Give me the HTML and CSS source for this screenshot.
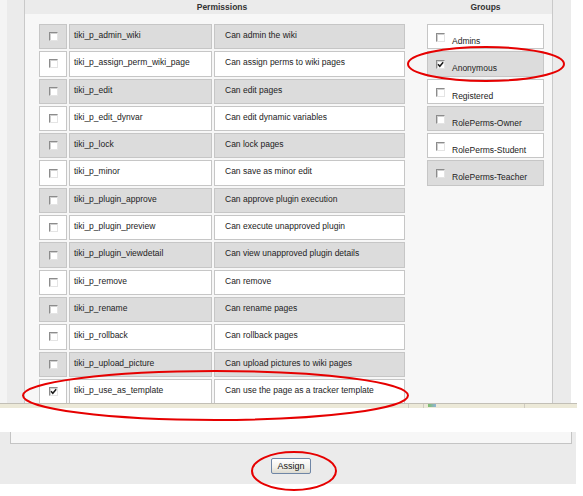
FILE: index.html
```html
<!DOCTYPE html>
<html lang="en">
<head>
<meta charset="utf-8">
<title>Assign permissions</title>
<link rel="stylesheet" href="styles.css">
</head>
<body>
<div class="top">
  <div class="panel">
    <div class="panel-head">
      <div class="head-cell">Permissions</div>
      <div class="head-cell">Groups</div>
    </div>
    <div class="panel-body">
      <div class="perms">
        <div class="cell chk odd"><span class="cb"></span></div><div class="cell name odd">tiki_p_admin_wiki</div><div class="cell desc odd">Can admin the wiki</div>
        <div class="cell chk"><span class="cb"></span></div><div class="cell name">tiki_p_assign_perm_wiki_page</div><div class="cell desc">Can assign perms to wiki pages</div>
        <div class="cell chk odd"><span class="cb"></span></div><div class="cell name odd">tiki_p_edit</div><div class="cell desc odd">Can edit pages</div>
        <div class="cell chk"><span class="cb"></span></div><div class="cell name">tiki_p_edit_dynvar</div><div class="cell desc">Can edit dynamic variables</div>
        <div class="cell chk odd"><span class="cb"></span></div><div class="cell name odd">tiki_p_lock</div><div class="cell desc odd">Can lock pages</div>
        <div class="cell chk"><span class="cb"></span></div><div class="cell name">tiki_p_minor</div><div class="cell desc">Can save as minor edit</div>
        <div class="cell chk odd"><span class="cb"></span></div><div class="cell name odd">tiki_p_plugin_approve</div><div class="cell desc odd">Can approve plugin execution</div>
        <div class="cell chk"><span class="cb"></span></div><div class="cell name">tiki_p_plugin_preview</div><div class="cell desc">Can execute unapproved plugin</div>
        <div class="cell chk odd"><span class="cb"></span></div><div class="cell name odd">tiki_p_plugin_viewdetail</div><div class="cell desc odd">Can view unapproved plugin details</div>
        <div class="cell chk"><span class="cb"></span></div><div class="cell name">tiki_p_remove</div><div class="cell desc">Can remove</div>
        <div class="cell chk odd"><span class="cb"></span></div><div class="cell name odd">tiki_p_rename</div><div class="cell desc odd">Can rename pages</div>
        <div class="cell chk"><span class="cb"></span></div><div class="cell name">tiki_p_rollback</div><div class="cell desc">Can rollback pages</div>
        <div class="cell chk odd"><span class="cb"></span></div><div class="cell name odd">tiki_p_upload_picture</div><div class="cell desc odd">Can upload pictures to wiki pages</div>
        <div class="cell chk"><span class="cb on"><svg viewBox="0 0 7 7" width="7" height="7"><path d="M1 3.2 L2.8 5.3 L6.2 1.2" fill="none" stroke="#1a1a1a" stroke-width="1.5"/></svg></span></div><div class="cell name">tiki_p_use_as_template</div><div class="cell desc">Can use the page as a tracker template</div>
      </div>
      <div class="groups">
        <div class="cell grp"><span class="cb"></span><span class="glabel">Admins</span></div>
        <div class="cell grp odd"><span class="cb on"><svg viewBox="0 0 7 7" width="7" height="7"><path d="M1 3.2 L2.8 5.3 L6.2 1.2" fill="none" stroke="#1a1a1a" stroke-width="1.5"/></svg></span><span class="glabel">Anonymous</span></div>
        <div class="cell grp"><span class="cb"></span><span class="glabel">Registered</span></div>
        <div class="cell grp odd"><span class="cb"></span><span class="glabel">RolePerms-Owner</span></div>
        <div class="cell grp"><span class="cb"></span><span class="glabel">RolePerms-Student</span></div>
        <div class="cell grp odd"><span class="cb"></span><span class="glabel">RolePerms-Teacher</span></div>
      </div>
    </div>
  </div>
</div>
<div class="statusbar">
  <span class="sb-part w1"></span><span class="sb-part w2"></span><span class="sb-part w3"><i class="sb-icon"></i></span><span class="sb-part w4"></span>
</div>
<div class="gap"></div>
<div class="bottom">
  <div class="panel-foot"></div>
  <div class="actions"><button class="btn" type="button">Assign</button></div>
</div>
<svg class="marks" width="583" height="496" viewBox="0 0 583 496">
  <ellipse cx="486" cy="64" rx="78" ry="17" fill="none" stroke="#e60000" stroke-width="2"/>
  <ellipse cx="215.5" cy="395.5" rx="192.5" ry="24.5" fill="none" stroke="#e60000" stroke-width="2"/>
  <ellipse cx="294" cy="471" rx="42" ry="19" fill="none" stroke="#e60000" stroke-width="2"/>
</svg>
</body>
</html>
```
FILE: styles.css
```css
html, body {
  margin: 0;
  padding: 0;
  background: #ffffff;
}
body {
  position: relative;
  width: 583px;
  height: 496px;
  overflow: hidden;
  font-family: "Liberation Sans", Arial, sans-serif;
  font-size: 8.5px;
  color: #222;
}

/* upper area: grey page with the permissions panel */
.top {
  box-sizing: border-box;
  width: 571px;
  height: 403px;
  overflow: hidden;
  background: #ebebeb;
  border-left: 7px solid #f4f4f4;
  padding: 0 18px 0 17px;
}
.panel {
  height: 100%;
  border-left: 1px solid #c9c9c9;
  border-right: 1px solid #c9c9c9;
  background: #f7f7f7;
}
.panel-head {
  display: grid;
  grid-template-columns: 366px 117px;
  column-gap: 22px;
  padding: 0 8px 0 14px;
  height: 14px;
  background: #ebebeb;
}
.head-cell {
  text-align: center;
  font-weight: bold;
  color: #333;
  line-height: 10px;
  padding-top: 2px;
}
.panel-body {
  display: grid;
  grid-template-columns: 366px 117px;
  column-gap: 22px;
  align-items: start;
  padding: 10px 8px 0 14px;
}
.perms {
  display: grid;
  grid-template-columns: 28px 143px 191px;
  grid-auto-rows: 25.3px;
  gap: 2px;
}
.groups {
  display: grid;
  grid-auto-rows: 25.3px;
  row-gap: 2px;
}
.cell {
  box-sizing: border-box;
  border: 1px solid #c6c6c6;
  background: #ffffff;
  line-height: 10px;
  white-space: nowrap;
  overflow: hidden;
}
.cell.odd {
  background: #dcdcdc;
}
.chk {
  display: flex;
  align-items: center;
  justify-content: center;
}
.name {
  padding: 5px 0 0 4px;
}
.desc {
  padding: 5px 0 0 10px;
}
.grp {
  display: flex;
  align-items: flex-start;
  padding: 8px 0 0 8px;
}
.glabel {
  margin: 3px 0 0 7px;
}

/* classic sunken checkbox */
.cb {
  box-sizing: border-box;
  display: inline-flex;
  align-items: center;
  justify-content: center;
  width: 9px;
  height: 9px;
  background: #fff;
  border: 1px solid;
  border-color: #8c8c8c #e4e4e4 #e4e4e4 #8c8c8c;
  box-shadow: inset 1px 1px 0 #d0d0d0;
}
.cb svg {
  display: block;
}

/* thin window status strip */
.statusbar {
  display: flex;
  width: 577px;
  height: 4px;
  background: #ece9d8;
  border-top: 1px solid #c2bfb6;
}
.sb-part {
  height: 100%;
  border-right: 1px solid #cfcbc0;
}
.w1 { width: 408px; }
.w2 { width: 14px; }
.w3 { width: 100px; position: relative; }
.w4 { flex: 1; border-right: none; }
.sb-icon {
  position: absolute;
  left: 4px;
  top: 0;
  width: 8px;
  height: 3px;
  background: linear-gradient(90deg, #7fbf6a, #8fb3d9);
}
.gap {
  height: 24px;
  background: #ffffff;
}

/* lower area: end of the form and the submit button */
.bottom {
  box-sizing: border-box;
  width: 576px;
  height: 52px;
  background: #ebebeb;
  padding: 0 4px 0 10px;
}
.panel-foot {
  height: 11px;
  background: #f7f7f7;
  border: 1px solid #c4c4c4;
  border-top: none;
}
.actions {
  display: flex;
  justify-content: center;
  padding-top: 14px;
}
.btn {
  box-sizing: border-box;
  width: 40px;
  height: 16px;
  padding: 0;
  font-family: "Liberation Sans", Arial, sans-serif;
  font-size: 9px;
  color: #111;
  border: 1px solid #6f86a6;
  border-radius: 2px;
  background: linear-gradient(#ffffff, #f1f0ea 60%, #dcdad0);
}

.marks {
  position: absolute;
  left: 0;
  top: 0;
  pointer-events: none;
}
```
